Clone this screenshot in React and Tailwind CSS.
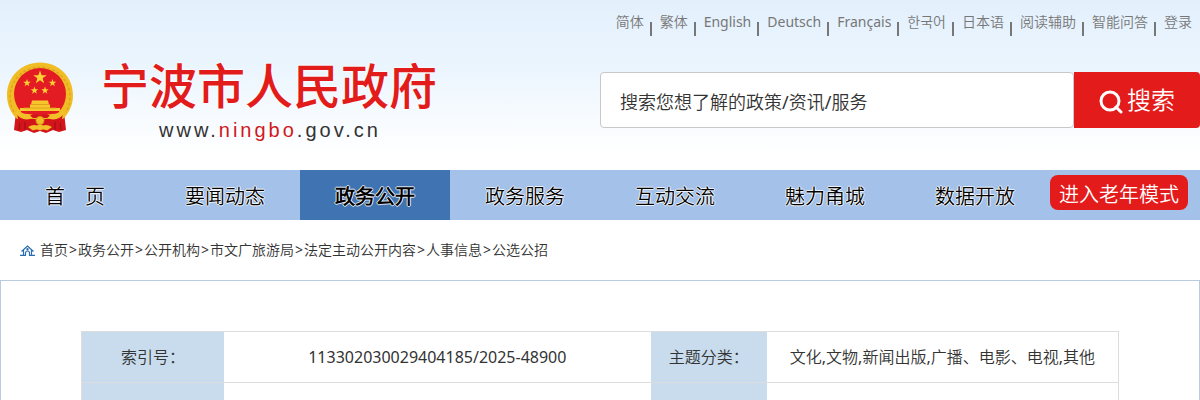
const languages = ['简体', '繁体', 'English', 'Deutsch', 'Français', '한국어', '日本语', '阅读辅助', '智能问答', '登录'];
const channels = ['首\u3000页', '要闻动态', '政务公开', '政务服务', '互动交流', '魅力甬城', '数据开放'];
const trail = ['首页', '政务公开', '公开机构', '市文广旅游局', '法定主动公开内容', '人事信息', '公选公招'];
const STAR = '0,-10 2.4,-3.2 9.5,-3.1 3.8,1.2 5.9,8.1 0,4 -5.9,8.1 -3.8,1.2 -9.5,-3.1 -2.4,-3.2';

function Emblem() {
  return (
    <svg className="h-[72px] w-[68px] shrink-0" viewBox="0 0 68 72" aria-hidden="true">
      <path d="M10 50L8 68l7 2 6-2 7 3 6-2 6 2 7-3 6 2 7-2-2-18z" fill="#d3141b" />
      <path d="M14 58l-1 10M19 60v8M54 58l1 10M49 60v8" stroke="#9f1016" strokeWidth="1.2" />
      <path d="M34 .5C15 .5 1 15 1 33c0 10 4 18 10 24l12-3h22l12 3c6-6 10-14 10-24C67 15 53 .5 34 .5z" fill="#f0bd25" />
      <path d="M8 50A30 30 0 1 1 60 50" fill="none" stroke="#dfa51e" strokeWidth="1.500" strokeDasharray="3 2" />
      <path d="M11 52q12-5 23 1q11-6 23-1l-2 9q-12-5-21 0q-9-5-21 0z" fill="#d3141b" />
      <circle cx="34" cy="32" r="26" fill="#e31c23" />
      <g fill="#fbd136">
        <polygon points={STAR} transform="translate(34 15.500) scale(.7)" />
        <polygon points={STAR} transform="translate(21 21) scale(.4)" />
        <polygon points={STAR} transform="translate(46.500 21) scale(.4)" />
        <polygon points={STAR} transform="translate(28.500 28.500) scale(.4)" />
        <polygon points={STAR} transform="translate(39 28.500) scale(.4)" />
      </g>
      <path d="M26 38.500h16l1 4h1v3.500h10v3H14v-3h10v-3.500h1z" fill="#f7c62c" />
      <path d="M25 42.500h18M18 46h32" stroke="#d99a18" strokeWidth=".8" />
      <path d="M11 47q4 5 11 5q5 0 7 2h10q2-2 7-2q7 0 11-5l1 5q-6 7-14 5q-5-1-10 2q-5-3-10-2q-8 2-14-5z" fill="#f3c02a" />
      <path d="M24 53.500q5-3 10 0q5-3 10 0l-3 2.500h-14z" fill="#d3141b" />
      <path d="M22 65q5-3 9-1.500l3-2 3 2q4-1.500 9 1.500l-5 3.500q-4-2-7 0q-3-2-7 0z" fill="#f3c02a" />
      <circle cx="34" cy="58.500" r="4" fill="#f0bd25" stroke="#d99a18" />
    </svg>
  );
}

const label = 'border-t border-[#ddd] bg-[#c8dced] p-0 text-center font-normal';
const value = 'border-t border-[#ddd] p-0 text-center';

export default function App() {
  return (
    <div className="flex h-screen flex-col overflow-hidden bg-white font-['Noto_Sans','Noto_Sans_CJK_SC_DemiLight','Noto_Sans_CJK_SC',sans-serif] text-[#333]">
      <header className="shrink-0 bg-linear-to-b from-[#e3f0fc] via-[#ebf5fe] via-40% to-white to-90%">
        <ul className="flex h-11 justify-end pr-2 text-sm leading-[44px] text-[#777]">
          {languages.map((name, i) => (
            <li key={name} className="flex">
              {i > 0 && <span className="mt-[22px] mr-2 ml-[6px] h-[14px] w-[2px] bg-[#777]" />}
              <a href="#">{name}</a>
            </li>
          ))}
        </ul>
        <div className="flex h-[126px] justify-between">
          <a href="#" className="flex pt-[18px] pl-[6px]">
            <Emblem />
            <span className="ml-[27px] block -mt-1">
              <span className="block font-['Noto_Sans_CJK_SC_Medium','Noto_Sans_CJK_SC',sans-serif] text-5xl leading-[50px] font-medium text-[#e21b1b] [text-shadow:0_0_2px_#fff,0_0_3px_#fff]">宁波市人民政府</span>
              <span className="block pl-[58px] font-['Liberation_Sans',sans-serif] text-xl leading-[44px] tracking-[3px]">
                www.<span className="text-[#d0191d]">ningbo</span>.gov.cn
              </span>
            </span>
          </a>
          <form className="mt-7 flex h-14 w-1/2" onSubmit={(e) => e.preventDefault()}>
            <input
              type="text"
              aria-label="搜索"
              placeholder="搜索您想了解的政策/资讯/服务"
              className="min-w-0 flex-1 rounded border border-[#c8c8c8] bg-white px-[19px] pt-[3px] text-lg outline-none placeholder:text-[#333] placeholder:opacity-100"
            />
            <button type="submit" className="flex w-[126px] items-center justify-center gap-1 rounded-r bg-[#e41b1b] text-2xl text-white">
              <svg className="mt-1 h-6 w-6" viewBox="0 0 24 24" fill="none" stroke="#fff" strokeWidth="3" aria-hidden="true">
                <circle cx="11" cy="11" r="9" />
                <path d="M17 17l5 5" strokeLinecap="round" />
              </svg>
              搜索
            </button>
          </form>
        </div>
      </header>

      <nav className="flex h-[50px] shrink-0 bg-[#a3c1e9] text-xl leading-[54px] text-black">
        {channels.map((name) => (
          <a
            key={name}
            href="#"
            className={`h-full w-1/8 text-center [text-shadow:1px_0_0_#fffc,-1px_0_0_#fffc,0_1px_0_#fffc,0_-1px_0_#fffc] ${name === '政务公开' ? 'bg-[#3f73b2] font-bold' : ''}`}
          >
            {name}
          </a>
        ))}
        <button type="button" className="mt-[5px] h-[35px] w-[138px] rounded-lg bg-[#e41b1b] pt-[2px] text-xl leading-[35px] text-white">进入老年模式</button>
      </nav>

      <div className="flex h-[60px] shrink-0 items-center pl-5 text-sm">
        <svg className="mr-[5px] h-[11px] w-[15px]" viewBox="0 0 15 11" fill="none" stroke="#2a6cb0" strokeWidth="1.200" aria-hidden="true">
          <path d="M1.500 6.500L7.500 1l6 5.500M3.500 5v5M11.500 5v5M0 10.300h5.500V8a2 2 0 0 1 4 0v2.300H15" />
          <circle cx="7.500" cy="4.200" r=".6" />
        </svg>
        {trail.map((name, i) => (
          <span key={name}>{i > 0 && <span className="px-px">&gt;</span>}<a href="#">{name}</a></span>
        ))}
      </div>

      <main className="flex-1 border border-b-0 border-[#b9cbe0] px-20 pt-[50px]">
        <table className="w-full table-fixed border-separate border-spacing-0 border-x border-[#ddd] text-base">
          <colgroup>
            <col className="w-[13.7%]" />
            <col className="w-[41.2%]" />
            <col className="w-[11.2%]" />
            <col />
          </colgroup>
          <tbody>
            <tr className="h-[51px]">
              <th scope="row" className={label}>索引号：</th>
              <td className={value}>113302030029404185/2025-48900</td>
              <th scope="row" className={label}>主题分类：</th>
              <td className={value}>文化,文物,新闻出版,广播、电影、电视,其他</td>
            </tr>
            <tr className="h-[51px]">
              <th className={label} />
              <td className={value} />
              <th className={label} />
              <td className={value} />
            </tr>
          </tbody>
        </table>
      </main>
    </div>
  );
}
